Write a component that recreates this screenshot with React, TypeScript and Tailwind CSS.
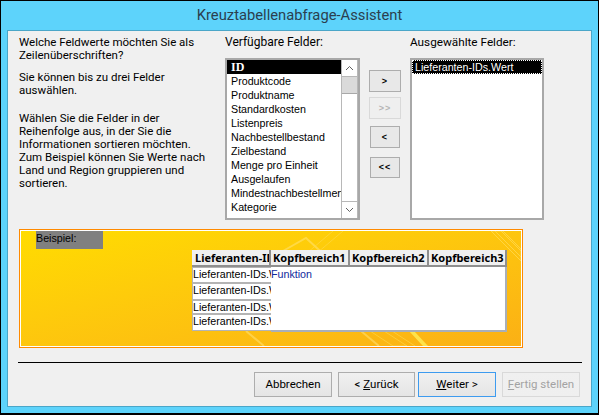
const font = { fontFamily: 'Roboto, "Noto Sans", sans-serif' };
const listFont = { fontFamily: '"Liberation Sans", Arial, sans-serif' };

const fields = [
  'Produktcode',
  'Produktname',
  'Standardkosten',
  'Listenpreis',
  'Nachbestellbestand',
  'Zielbestand',
  'Menge pro Einheit',
  'Ausgelaufen',
  'Mindestnachbestellmenge',
  'Kategorie',
];

const MoveButton = ({ label, disabled, narrow, className }: { label: string; disabled?: boolean; narrow?: boolean; className: string }) => (
  <button
    style={listFont}
    className={`${narrow ? 'w-[30px] mx-px' : 'w-[32px]'} ${className} flex items-center justify-center border text-[9px] font-bold tracking-[1px] ${disabled ? 'border-[#d9d9d9] bg-[#efefef] text-[#b5b5b5]' : 'border-[#adadad] bg-[#e8e8e8] text-black'}`}
  >
    {label}
  </button>
);

const WizardButton = ({ children, className }: { children: React.ReactNode; className: string }) => (
  <button className={`h-[25px] text-[11.5px] flex items-center justify-center border bg-gradient-to-b from-[#f0f0f0] to-[#e5e5e5] ${className}`}>
    {children}
  </button>
);

const HeaderCell = ({ label, className }: { label: string; className: string }) => (
  <div
    style={{ fontFamily: '"Noto Sans", sans-serif' }}
    className={`h-[17px] overflow-hidden whitespace-nowrap bg-[#f0f0f0] border-r-2 border-b-2 border-[#8f8f8f] text-[11px] leading-[15px] font-bold text-black ${className}`}
  >
    {label}
  </div>
);

const RowCell = ({ className }: { className: string }) => (
  <div style={listFont} className={`w-[79px] overflow-hidden whitespace-nowrap bg-white border border-r-0 border-[#b4b4b4] text-[10.7px] leading-[13px] text-black ${className}`}>
    Lieferanten-IDs.Wert
  </div>
);

export default function App() {
  return (
    <div style={font} className="w-[599px] h-[415px] overflow-hidden border border-black border-b-2 bg-[#5dd3fb] flex flex-col">
      <div className="h-[29px] shrink-0 flex items-center justify-center text-[14.75px] text-[#2b3f4f]">
        Kreuztabellenabfrage-Assistent
      </div>

      <div className="mx-[6px] h-[377px] border border-[#4aa6c8] bg-[#f0f0f0] pt-[5px] flex flex-col">
        {/* top area */}
        <div className="flex h-[193px] pl-[11px] text-[12px] leading-[13px] text-black">
          <div className="w-[206px] shrink-0 pr-[14px] text-[11.5px] leading-[13px]">
            <p>Welche Feldwerte möchten Sie als Zeilenüberschriften?</p>
            <p className="mt-[9px]">Sie können bis zu drei Felder auswählen.</p>
            <p className="mt-[15px]">
              Wählen Sie die Felder in der Reihenfolge aus, in der Sie die Informationen sortieren möchten. Zum
              Beispiel können Sie Werte nach Land und Region gruppieren und sortieren.
            </p>
          </div>

          <div className="w-[144px] shrink-0">
            <div className="h-[22px]">Verfügbare Felder:</div>
            <div className="w-[135px] h-[162px] border-2 border-[#a8a8a8] bg-white flex">
              <div style={listFont} className="w-[115px] overflow-hidden text-[10.7px] leading-[14px] whitespace-nowrap">
                <div className="bg-black text-white font-bold" style={{ fontFamily: '"Liberation Serif", serif', fontSize: 12 }}>
                  <span className="pl-[4px]">ID</span>
                </div>
                {fields.map((f) => (
                  <div key={f} className="pl-[4px]">
                    {f}
                  </div>
                ))}
              </div>
              <div className="w-[17px] border-l border-r border-[#b8b8b8] flex flex-col">
                <div className="h-[17px] flex items-center justify-center border-b border-[#b8b8b8]">
                  <svg width="9" height="6" viewBox="0 0 9 6" fill="none" stroke="#606060">
                    <path d="M1 5l3.5-3.5L8 5" />
                  </svg>
                </div>
                <div className="h-[17px] bg-[#dadada] border-b border-[#a8a8a8]" />
                <div className="flex-1" />
                <div className="h-[17px] flex items-center justify-center border-t border-[#b8b8b8]">
                  <svg width="9" height="6" viewBox="0 0 9 6" fill="none" stroke="#606060">
                    <path d="M1 1l3.5 3.5L8 1" />
                  </svg>
                </div>
              </div>
            </div>
          </div>

          <div className="w-[41px] shrink-0 flex flex-col pt-[34px]">
            <MoveButton label=">" className="h-[22px]" />
            <MoveButton label=">>" disabled className="h-[22px] mt-[5px]" />
            <MoveButton label="<" narrow className="h-[22px] mt-[7px]" />
            <MoveButton label="<<" narrow className="h-[21px] mt-[9px]" />
          </div>

          <div className="w-[134px] shrink-0">
            <div className="h-[22px] text-[11.75px]">Ausgewählte Felder:</div>
            <div className="h-[162px] border-2 border-[#a8a8a8] bg-white">
              <div style={listFont} className="h-[14px] bg-black text-white text-[10.7px] leading-[13px] pl-[2px] border border-dotted border-white whitespace-nowrap">
                Lieferanten-IDs.Wert
              </div>
            </div>
          </div>
        </div>

        {/* example panel */}
        <div className="relative ml-[11px] w-[504px] h-[119px] border border-[#ff8a00] bg-white p-px shrink-0">
          <div className="relative h-full overflow-hidden bg-gradient-to-br from-[#ffdc00] to-[#fbb015] pl-[15px]">
            <svg className="absolute inset-0" width="500" height="115" viewBox="0 0 500 115" fill="none">
              <path d="M262 20l23-13 24 22-22 20z" stroke="#ffe680" strokeOpacity="0.5" strokeWidth="2" />
              <path d="M225 100l18 15M340 100l18 15" stroke="#ffe680" strokeOpacity="0.5" strokeWidth="2" />
              <path d="M360 98l26 17h-14l-26-17zM368 98l26 17M312 0l-26 22M322 0l-26 22" stroke="#ffd84d" strokeOpacity="0.6" />
              <path d="M388 100l14 15h5l-14-15z" fill="#ffe24a" />
              <path d="M470 0l30 30v-12l-18-18zM474 0l26 26M480 0l20 20" stroke="#ffd84d" strokeOpacity="0.8" />
            </svg>
            <div style={listFont} className="relative w-[67px] h-[18px] bg-[#808080] text-[10.7px] leading-[14px] text-black">Beispiel:</div>
            <div className="relative mt-px ml-[156px] w-[315px] flex flex-col">
              <div className="flex">
                <HeaderCell label="Lieferanten-IDs" className="w-[79px] pl-[3px]" />
                <HeaderCell label="Kopfbereich1" className="w-[79px] pl-[2px]" />
                <HeaderCell label="Kopfbereich2" className="w-[79px] pl-[2px]" />
                <HeaderCell label="Kopfbereich3" className="w-[78px] pl-[2px]" />
              </div>
              <div className="flex">
                <div className="w-[79px] flex flex-col">
                  <RowCell className="h-[16px]" />
                  <RowCell className="h-[17px]" />
                  <RowCell className="h-[14px]" />
                  <RowCell className="h-[17px]" />
                </div>
                <div style={listFont} className="flex-1 h-[65px] bg-white border-r-2 border-b-2 border-[#a9afb8] text-[10.7px] leading-[14px] text-[#102a9c]">
                  Funktion
                </div>
              </div>
            </div>
          </div>
        </div>

        <div className="ml-[10px] w-[564px] h-px mt-[14px] bg-black shrink-0" />

        {/* bottom buttons */}
        <div className="flex mt-[9px] ml-[246px]">
          <WizardButton className="w-[78px] border-[#adadad] text-black">Abbrechen</WizardButton>
          <WizardButton className="w-[77px] ml-[6px] border-[#adadad] text-black">
            &lt;&nbsp;<u>Z</u>urück
          </WizardButton>
          <WizardButton className="w-[78px] ml-[3px] border-[#3d9bef] text-black">
            <u>W</u>eiter &gt;
          </WizardButton>
          <WizardButton className="w-[78px] ml-[6px] border-[#d9d9d9] text-[#a3a3a3] from-[#efefef] to-[#efefef]">
            <u>F</u>ertig stellen
          </WizardButton>
        </div>
      </div>
    </div>
  );
}
